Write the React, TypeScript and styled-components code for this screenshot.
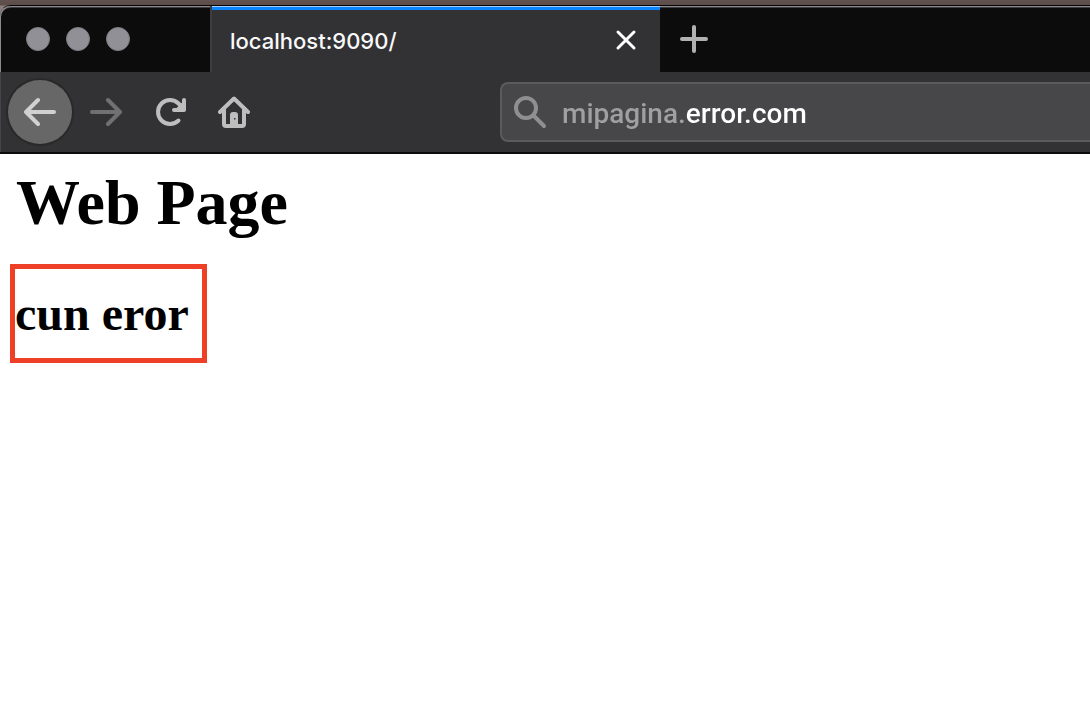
import React from "react";
import styled, { createGlobalStyle } from "styled-components";

const uiFont = `Inter, Roboto, "Liberation Sans", sans-serif`;

const GlobalStyle = createGlobalStyle`
  * { box-sizing: border-box; }
  body { margin: 0; background: #fff; }
`;

const Desktop = styled.div`
  padding-top: 5px;
  background: linear-gradient(#62524f, #5c4c4a 5px, #8d7d7a 6px);
`;

const BrowserWindow = styled.div`
  overflow: hidden;
  min-height: calc(100vh - 5px);
  border-top: 1px solid #050505;
  border-radius: 10px 0 0 0;
  background: #fff;
`;

const TabBar = styled.header`
  display: flex;
  height: 66px;
  border-top-left-radius: 10px;
  background: #0c0c0d;
  box-shadow: inset 1px 1px 0 #8b8b8e, inset 0 2px 0 #3c3c3e;
`;

const WindowControls = styled.div`
  display: flex;
  align-items: center;
  gap: 16px;
  width: 210px;
  padding-left: 26px;
`;

const WindowButton = styled.button`
  width: 24px;
  height: 24px;
  padding: 0;
  border: 1px solid #7d7b82;
  border-radius: 50%;
  background: #929097;
`;

const Tab = styled.div`
  display: flex;
  align-items: center;
  justify-content: space-between;
  width: 450px;
  padding: 2px 20px 0 18px;
  border-left: 2px solid #3e3e40;
  background: linear-gradient(#a3cdfb 1px, #0a84ff 1px, #0a84ff 4px, #323234 4px);
`;

const TabTitle = styled.span`
  padding-top: 2px;
  color: #f9f9fa;
  font: 500 22px/28px ${uiFont};
`;

const IconButton = styled.button<{ $size: number; $tone?: string }>`
  display: flex;
  align-items: center;
  justify-content: center;
  flex: none;
  width: ${(p) => p.$size}px;
  height: ${(p) => p.$size}px;
  padding: 0;
  border: 0;
  background: none;
  color: ${(p) => p.$tone ?? "#bebebe"};
`;

const NewTabButton = styled(IconButton)`
  align-self: center;
  margin-left: 18px;
`;

const BackButton = styled(IconButton)`
  border-radius: 50%;
  background: #676767;
  box-shadow: 0 0 0 2px #29292a;
`;

const Toolbar = styled.nav`
  display: flex;
  align-items: center;
  height: 82px;
  padding-left: 8px;
  border-bottom: 2px solid #0c0c0d;
  background: #323234;
  box-shadow: inset 1px 0 0 #454547;
`;

const NavButtons = styled.div`
  display: flex;
  align-items: center;
  width: 492px;
`;

const AddressBar = styled.label`
  display: flex;
  align-items: center;
  flex: 1;
  gap: 14px;
  height: 60px;
  padding-left: 10px;
  border: 2px solid #5b5b5d;
  border-right: 0;
  border-radius: 8px 0 0 8px;
  background: #474749;
  color: #8f8f90;
`;

const AddressInput = styled.input`
  flex: 1;
  min-width: 0;
  height: 40px;
  padding: 2px 0 0;
  border: 0;
  outline: 0;
  background: linear-gradient(90deg, #a0a0a1 123px, #fff 123px);
  background-clip: text;
  -webkit-background-clip: text;
  color: transparent;
  font: 500 28px/36px Roboto, Inter, "Liberation Sans", sans-serif;
`;

const Page = styled.main`
  padding: 12px 10px;
  color: #000;
  font-family: "Liberation Serif", "Times New Roman", serif;
`;

const PageTitle = styled.h1`
  margin: 0 0 24px;
  padding-left: 6px;
  font-size: 64px;
  line-height: 74px;
`;

const ErrorBox = styled.section`
  width: fit-content;
  padding: 17px 13px 17px 0;
  border: 5px solid #ee3f27;
`;

const ErrorText = styled.h2`
  margin: 0;
  font-size: 48px;
  line-height: 55px;
`;

const Icon = ({ size = 32, width = 4, children }: { size?: number; width?: number; children: React.ReactNode }) => (
  <svg
    width={size}
    height={size}
    viewBox={`0 0 ${size} ${size}`}
    fill="none"
    stroke="currentColor"
    strokeWidth={width}
    strokeLinecap="round"
    strokeLinejoin="round"
    aria-hidden="true"
  >
    {children}
  </svg>
);

export default function App() {
  return (
    <Desktop>
      <GlobalStyle />
      <BrowserWindow>
        <TabBar>
          <WindowControls>
            <WindowButton aria-label="Close window" />
            <WindowButton aria-label="Minimize window" />
            <WindowButton aria-label="Zoom window" />
          </WindowControls>
          <Tab>
            <TabTitle>localhost:9090/</TabTitle>
            <IconButton $size={28} $tone="#fff" aria-label="Close tab">
              <Icon size={28} width={3}>
                <path d="M6 6 22 22M22 6 6 22" />
              </Icon>
            </IconButton>
          </Tab>
          <NewTabButton $size={32} $tone="#b1b1b1" aria-label="New tab">
            <Icon>
              <path d="M16 4V28M4 16H28" />
            </Icon>
          </NewTabButton>
        </TabBar>
        <Toolbar aria-label="Navigation">
          <NavButtons>
            <BackButton $size={64} $tone="#d1d1d1" aria-label="Back">
              <Icon>
                <path d="M30 16H2M14 4 2 16 14 28" />
              </Icon>
            </BackButton>
            <IconButton $size={68} $tone="#707071" aria-label="Forward">
              <Icon>
                <path d="M2 16H30M18 4 30 16 18 28" />
              </Icon>
            </IconButton>
            <IconButton $size={62} aria-label="Reload">
              <Icon>
                <path d="M23.5 24.5A12 12 0 1 1 23.500 7.500L27 11" />
                <path d="M29 4V14H19" />
                <path d="M21 14 29 6V14Z" fill="currentColor" strokeWidth="2" />
              </Icon>
            </IconButton>
            <IconButton $size={64} aria-label="Home">
              <Icon>
                <path d="M2 16 16 2.500 30 16" />
                <path d="M6 14V28Q6 30 8 30H24Q26 30 26 28V14" />
                <path
                  d="M12 30V19Q12 16 15 16H17Q20 16 20 19V30ZM16 22V23.500H17.500V22Z"
                  fill="currentColor"
                  fillRule="evenodd"
                  stroke="none"
                />
              </Icon>
            </IconButton>
          </NavButtons>
          <AddressBar>
            <Icon size={36}>
              <circle cx="14" cy="14" r="10" />
              <path d="M22 22 32 32" />
            </Icon>
            <AddressInput aria-label="Address" defaultValue="mipagina.error.com" />
          </AddressBar>
        </Toolbar>
        <Page>
          <PageTitle>Web Page</PageTitle>
          <ErrorBox>
            <ErrorText>cun eror</ErrorText>
          </ErrorBox>
        </Page>
      </BrowserWindow>
    </Desktop>
  );
}
